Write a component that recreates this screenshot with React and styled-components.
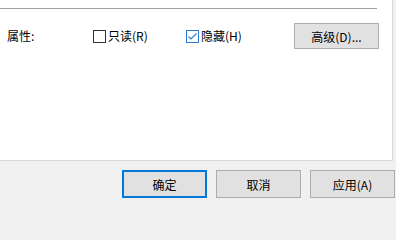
import React from "react";
import styled, { createGlobalStyle } from "styled-components";

const GlobalStyle = createGlobalStyle`
  body {
    margin: 0;
    background: #f0f0f0;
    font-family: "Microsoft YaHei UI", "Noto Sans CJK SC", "Noto Sans", sans-serif;
    font-size: 12px;
    color: #000;
  }
`;

const Page = styled.div`
  width: 396px;
  height: 200px;
  overflow: hidden;
  background: #f0f0f0;
`;

const Panel = styled.div`
  width: 392px;
  height: 152px;
  background: #fff;
  border-right: 1px solid #d9d9d9;
  border-bottom: 1px solid #d9d9d9;
  padding-top: 8px;
  box-sizing: content-box;
`;

const Separator = styled.div`
  width: 377px;
  height: 1px;
  background: #a0a0a0;
`;

const AttrRow = styled.div`
  display: grid;
  grid-template-columns: 86px 93px 108px 85px;
  align-items: center;
  margin-top: 14px;
  padding-left: 7px;
  height: 26px;
`;

const Label = styled.span`
  line-height: 16px;
`;

const Check = styled.label`
  display: flex;
  align-items: center;
  gap: 2px;
  line-height: 16px;
`;

const Box = styled.span`
  width: 11px;
  height: 11px;
  border: 1px solid ${(p) => (p.$checked ? "#2b79d2" : "#333")};
  background: #fff;
  display: flex;
  align-items: center;
  justify-content: center;
`;

const Button = styled.button`
  width: 85px;
  height: 26px;
  margin: 0;
  padding: 0;
  background: #e1e1e1;
  border: ${(p) => (p.$default ? "2px solid #0078d7" : "1px solid #adadad")};
  font: inherit;
  color: #000;
  box-sizing: border-box;
`;

const Footer = styled.div`
  display: flex;
  gap: 9px;
  padding: 9px 0 0 122px;
`;

const FooterButton = styled(Button)`
  height: 28px;
  flex: none;
`;

const CheckBox = ({ checked, children }) => (
  <Check>
    <Box $checked={checked}>
      {checked && (
        <svg width="11" height="11" viewBox="0 0 11 11">
          <path d="M1.5 5.5 L4 8 L9.5 2.5" fill="none" stroke="#2b79d2" strokeWidth="1.1" />
        </svg>
      )}
    </Box>
    {children}
  </Check>
);

export default function App() {
  return (
    <>
      <GlobalStyle />
      <Page>
        <Panel>
          <Separator />
          <AttrRow>
            <Label>属性:</Label>
            <CheckBox>只读(R)</CheckBox>
            <CheckBox checked>隐藏(H)</CheckBox>
            <Button>高级(D)...</Button>
          </AttrRow>
        </Panel>
        <Footer>
          <FooterButton $default>确定</FooterButton>
          <FooterButton>取消</FooterButton>
          <FooterButton>应用(A)</FooterButton>
        </Footer>
      </Page>
    </>
  );
}
